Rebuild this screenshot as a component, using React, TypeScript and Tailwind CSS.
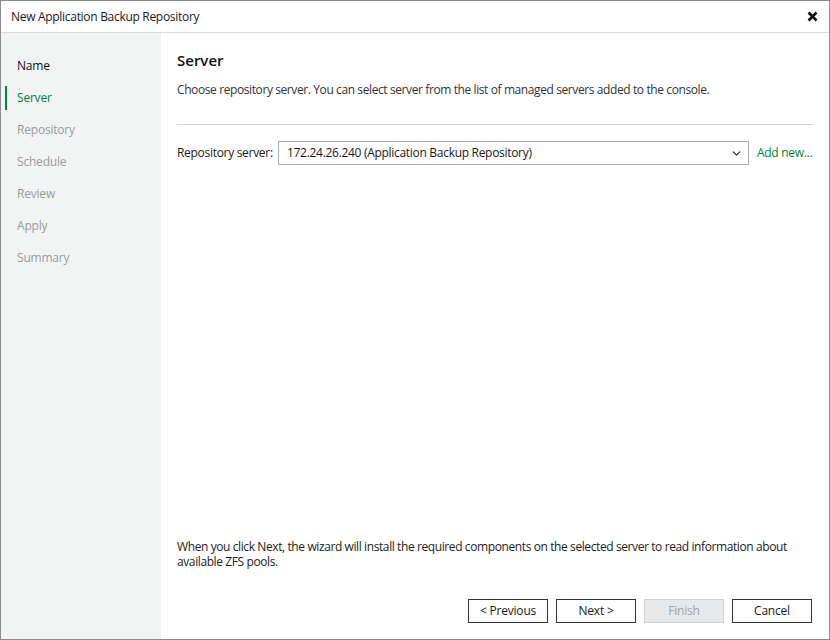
import { ChevronDown } from 'lucide-react';

const steps = ['Name', 'Server', 'Repository', 'Schedule', 'Review', 'Apply', 'Summary'];

export default function App() {
  const current = 1;

  return (
    <div
      className="flex h-[640px] w-[830px] flex-col border border-[#8c8c8c] bg-white text-[12px] text-[#1a1a1a]"
      style={{ fontFamily: '"Open Sans", "Noto Sans", sans-serif' }}
    >
      {/* Title bar */}
      <div className="flex h-[32px] shrink-0 items-center justify-between border-b border-[#dadada] pl-[10px] pr-[11px]">
        <span className="text-[12px] tracking-[-0.3px]">New Application Backup Repository</span>
        <svg width="11" height="11" viewBox="0 0 11 11">
          <path d="M1.5 1.5 L9.5 9.5 M9.5 1.5 L1.5 9.5" stroke="#111" strokeWidth="2.6" />
        </svg>
      </div>

      <div className="flex min-h-0 flex-1">
        {/* Steps */}
        <nav className="w-[160px] shrink-0 bg-[#f2f4f3] pt-[17px]">
          {steps.map((step, i) => (
            <div key={step} className="flex h-[32px] items-center">
              <span className={`ml-[4px] h-[24px] w-[2px] ${i === current ? 'bg-[#00883c]' : 'bg-transparent'}`}></span>
              <span
                className={`ml-[10px] text-[12px] tracking-[-0.2px] ${
                  i === current ? 'text-[#00843a]' : i < current ? 'text-[#111]' : 'text-[#9a9c9d]'
                }`}
              >
                {step}
              </span>
            </div>
          ))}
        </nav>

        {/* Content */}
        <main className="flex min-w-0 flex-1 flex-col pl-[16px] pr-[16px] pt-[17px] pb-[16px]">
          <h1 className="text-[15px] font-semibold leading-[20px] text-[#111]">Server</h1>
          <p className="mt-[12px] leading-[16px] tracking-[-0.4px] text-[#333]">
            Choose repository server. You can select server from the list of managed servers added to the console.
          </p>

          <div className="mt-[26px] border-t border-[#d4d4d4]"></div>

          <div className="mt-[16px] flex items-center">
            <label className="w-[101px] shrink-0 tracking-[-0.3px]">Repository server:</label>
            <div className="flex h-[24px] w-[471px] shrink-0 items-center justify-between border border-[#adadad] pl-[8px] pr-[5px]">
              <span className="tracking-[-0.3px]">172.24.26.240 (Application Backup Repository)</span>
              <ChevronDown size={13} strokeWidth={2.5} color="#333" />
            </div>
            <span className="ml-[8px] whitespace-nowrap tracking-[-0.3px] text-[#00843a]">Add new...</span>
          </div>

          <div className="flex-1"></div>

          <p className="leading-[15px] tracking-[-0.4px] text-[#222]">
            When you click Next, the wizard will install the required components on the selected server to read information about
            available ZFS pools.
          </p>

          <div className="mt-[30px] flex justify-end gap-[8px] pr-[1px]">
            <button className="h-[24px] w-[80px] border border-[#333] bg-white tracking-[-0.2px]">&lt; Previous</button>
            <button className="h-[24px] w-[80px] border border-[#333] bg-white tracking-[-0.2px]">Next &gt;</button>
            <button className="h-[24px] w-[80px] border border-[#cfd1d2] bg-[#e6e8e9] tracking-[-0.2px] text-[#a0a2a3]">Finish</button>
            <button className="h-[24px] w-[80px] border border-[#333] bg-white tracking-[-0.2px]">Cancel</button>
          </div>
        </main>
      </div>
    </div>
  );
}
